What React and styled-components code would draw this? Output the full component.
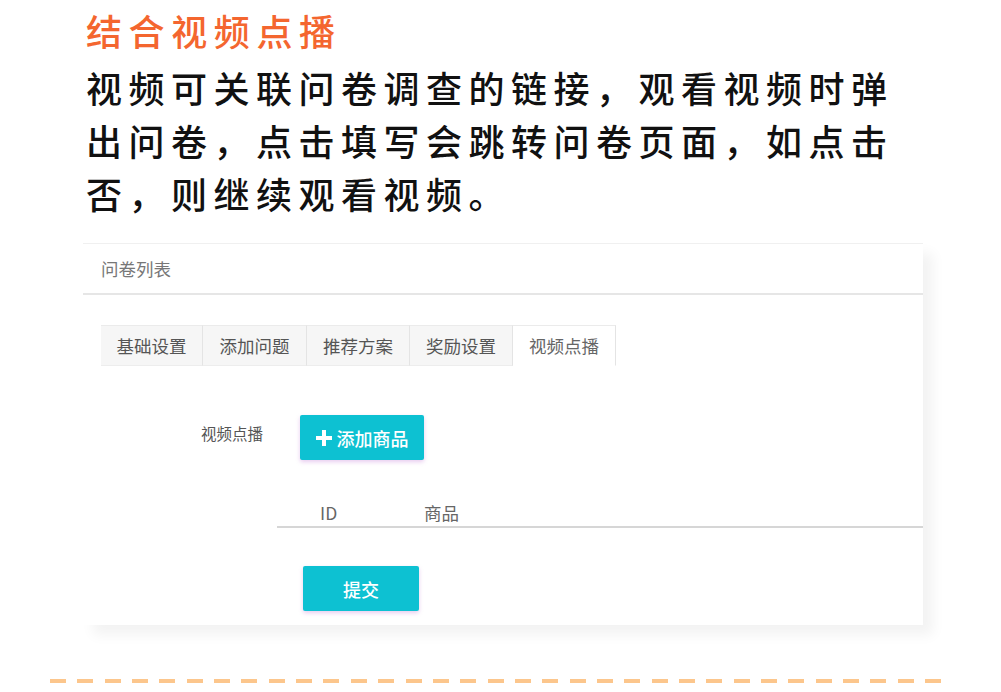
import styled, { createGlobalStyle } from "styled-components";

const GlobalStyle = createGlobalStyle`
  body {
    margin: 0;
    background: #fff;
    font-family: "Noto Sans CJK SC", "Noto Sans", sans-serif;
  }
`;

const Page = styled.div`
  width: 1001px;
  height: 692px;
  overflow: hidden;
  padding-top: 5px;
  box-sizing: border-box;
`;

const Intro = styled.section`
  padding-left: 86px;
`;

const Title = styled.h1`
  margin: 0;
  font-size: 36px;
  line-height: 50px;
  font-weight: 500;
  letter-spacing: 6.6px;
  color: #f4662f;
`;

const Lead = styled.p`
  margin: 6px 0 0;
  font-size: 36px;
  line-height: 53px;
  font-weight: 500;
  letter-spacing: 6.5px;
  color: #111;
`;

const Card = styled.div`
  margin: 23px 0 0 83px;
  width: 840px;
  background: #fff;
  border-top: 1px solid #f0f0f0;
  box-shadow: 10px 10px 12px rgba(0, 0, 0, 0.05);
`;

const CardHeader = styled.div`
  height: 49px;
  padding-left: 18px;
  display: flex;
  align-items: center;
  border-bottom: 2px solid #e6e6e6;
  font-size: 17.5px;
  color: #777;
`;

const CardBody = styled.div`
  padding: 30px 0 14px 18px;
`;

const Tabs = styled.div`
  display: flex;
  height: 41px;
`;

const Tab = styled.div`
  width: ${(p) => p.$w}px;
  display: flex;
  align-items: center;
  justify-content: center;
  box-sizing: border-box;
  font-size: 17.5px;
  color: ${(p) => (p.$active ? "#666" : "#555")};
  background: ${(p) => (p.$active ? "#fff" : "#f6f6f6")};
  border-top: 1px solid #ebebeb;
  border-right: 1px solid #e4e4e4;
  border-bottom: 1px solid ${(p) => (p.$active ? "transparent" : "#ededed")};
`;

const Form = styled.div`
  display: grid;
  grid-template-columns: 176px 1fr;
  margin-top: 49px;
`;

const Label = styled.div`
  text-align: right;
  padding: 8px 14px 0 0;
  font-size: 15.5px;
  line-height: 20px;
  color: #555;
`;

const Field = styled.div`
  display: flex;
  flex-direction: column;
  align-items: flex-start;
`;

const Button = styled.button`
  width: ${(p) => p.$w}px;
  height: 45px;
  margin-left: ${(p) => p.$ml}px;
  display: flex;
  align-items: center;
  justify-content: center;
  gap: 5px;
  border: none;
  border-radius: 2px;
  background: #0dc1d2;
  color: #fff;
  font-family: inherit;
  font-size: 18px;
  font-weight: 500;
  box-shadow: 0 2px 4px rgba(190, 110, 210, 0.35);
  cursor: pointer;
`;

const Table = styled.div`
  align-self: stretch;
  margin-top: 38px;
`;

const HeadRow = styled.div`
  display: flex;
  height: 28px;
  padding-left: 43px;
  align-items: center;
  border-bottom: 2px solid #d6d6d6;
  font-size: 17.5px;
  color: #666;
`;

const HeadCell = styled.div`
  width: ${(p) => p.$w}px;
`;

const Divider = styled.div`
  margin: 54px 0 0 50px;
  width: 891px;
  height: 3.5px;
  background: repeating-linear-gradient(
    to right,
    #fcc68c 0,
    #fcc68c 16px,
    transparent 16px,
    transparent 27.35px
  );
`;

const PlusIcon = () => (
  <svg width="16" height="16" viewBox="0 0 16 16">
    <rect x="6" y="0" width="4" height="16" fill="#fff" />
    <rect x="0" y="6" width="16" height="4" fill="#fff" />
  </svg>
);

const tabs = [
  { name: "基础设置", w: 102 },
  { name: "添加问题", w: 104 },
  { name: "推荐方案", w: 103 },
  { name: "奖励设置", w: 103 },
  { name: "视频点播", w: 103, active: true },
];

export default function App() {
  return (
    <Page>
      <GlobalStyle />
      <Intro>
        <Title>结合视频点播</Title>
        <Lead>
          视频可关联问卷调查的链接，观看视频时弹
          <br />
          出问卷，点击填写会跳转问卷页面，如点击
          <br />
          否，则继续观看视频。
        </Lead>
      </Intro>
      <Card>
        <CardHeader>问卷列表</CardHeader>
        <CardBody>
          <Tabs>
            {tabs.map((t) => (
              <Tab key={t.name} $w={t.w} $active={t.active}>
                {t.name}
              </Tab>
            ))}
          </Tabs>
          <Form>
            <Label>视频点播</Label>
            <Field>
              <Button $w={124} $ml={23}>
                <PlusIcon />
                添加商品
              </Button>
              <Table>
                <HeadRow>
                  <HeadCell $w={104}>ID</HeadCell>
                  <HeadCell>商品</HeadCell>
                </HeadRow>
              </Table>
              <Button $w={116} $ml={26} style={{ marginTop: 38 }}>
                提交
              </Button>
            </Field>
          </Form>
        </CardBody>
      </Card>
      <Divider />
    </Page>
  );
}
